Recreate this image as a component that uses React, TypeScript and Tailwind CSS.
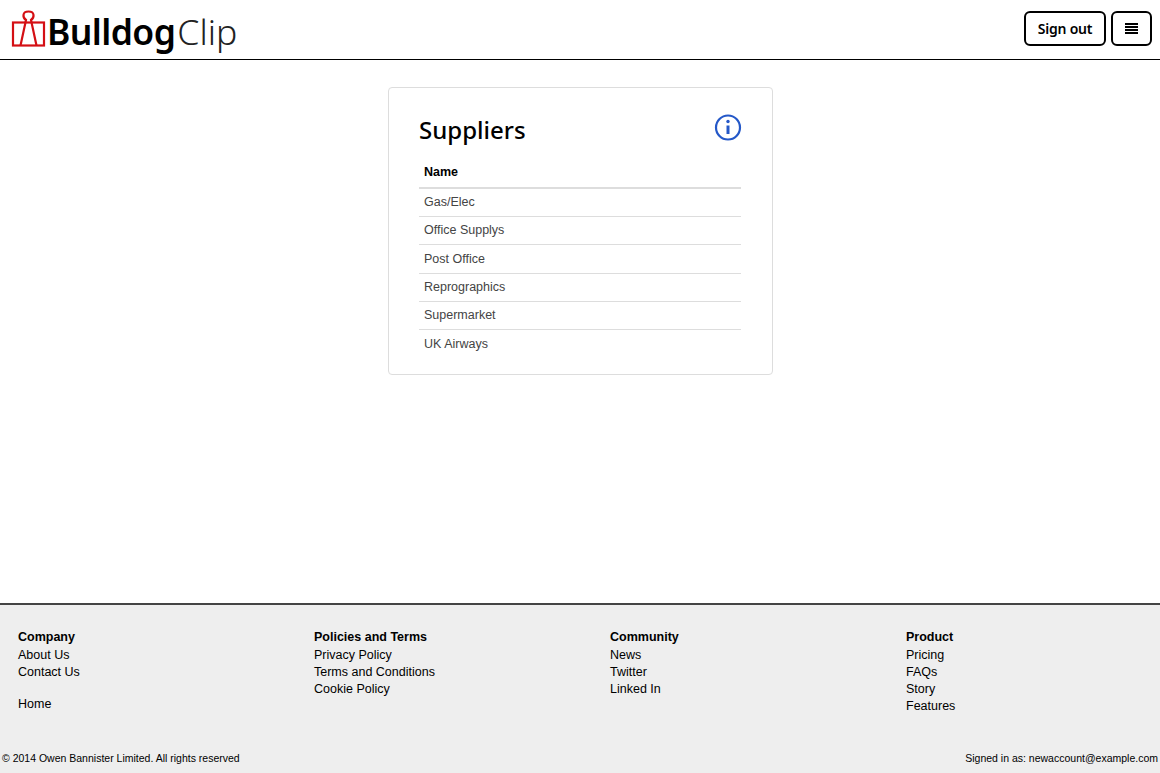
const suppliers = ["Gas/Elec", "Office Supplys", "Post Office", "Reprographics", "Supermarket", "UK Airways"];

const footerCols = [
  { title: "Company", links: ["About Us", "Contact Us"], extra: "Home" },
  { title: "Policies and Terms", links: ["Privacy Policy", "Terms and Conditions", "Cookie Policy"] },
  { title: "Community", links: ["News", "Twitter", "Linked In"] },
  { title: "Product", links: ["Pricing", "FAQs", "Story", "Features"] },
];

function ClipLogo() {
  return (
    <svg width="35" height="37" viewBox="0 0 35 37" fill="none" stroke="#d40f14" strokeWidth="2.2" className="mt-[-3px] block">
      <rect x="2" y="12.5" width="31" height="23" />
      <path d="M9.5 35.5 L15 10 C11.5 7.5 11 1.5 17.5 1.5 C24 1.5 23.5 7.5 20 10 L25.5 35.5" />
    </svg>
  );
}

export default function App() {
  return (
    <div className="flex h-[773px] flex-col bg-white font-['Liberation_Sans',sans-serif] text-black">
      <header className="flex h-[60px] shrink-0 items-center justify-between border-b border-black pl-[11px] pr-2">
        <div className="flex items-center">
          <ClipLogo />
          <div className="mt-[5px] ml-[1px] font-['Noto_Sans',sans-serif] text-[35.5px] leading-none tracking-[-0.6px]">
            <span className="font-semibold">Bulldog</span>
            <span className="ml-[2px] font-light tracking-[0px] text-[#222]">Clip</span>
          </div>
        </div>
        <div className="mt-[-3px] flex gap-[5px]">
          <button className="h-[35px] w-[82px] rounded-md border-2 border-black font-['Noto_Sans',sans-serif] text-[14px] font-semibold tracking-[-0.2px]">
            Sign out
          </button>
          <button className="flex h-[35px] w-[41px] flex-col items-center justify-center gap-[1px] rounded-md border-2 border-black">
            <span className="h-[2px] w-[13px] bg-black" />
            <span className="h-[2px] w-[13px] bg-black" />
            <span className="h-[2px] w-[13px] bg-black" />
            <span className="h-[2px] w-[13px] bg-black" />
          </button>
        </div>
      </header>

      <main className="flex flex-1 justify-center pt-[27px]">
        <section className="h-[288px] w-[385px] rounded border border-[#ddd] pl-[30.5px] pr-[30.5px] pt-[26px]">
          <div className="flex items-start justify-between">
            <h1 className="font-['Noto_Sans',sans-serif] text-[24px] font-medium leading-[32px]">Suppliers</h1>
            <svg width="28" height="28" viewBox="0 0 28 28" fill="none" stroke="#2458c8" className="mr-[-1px]">
              <circle cx="14" cy="13.5" r="12" strokeWidth="2.2" />
              <path d="M14 11.5 V20" strokeWidth="3" />
              <circle cx="14" cy="7.5" r="1.7" fill="#2458c8" stroke="none" />
            </svg>
          </div>
          <table className="mt-[13px] w-full text-[12.5px]">
            <thead>
              <tr className="border-b-2 border-[#ddd]">
                <th className="h-[29px] px-[5px] pb-[1px] text-left font-bold">Name</th>
              </tr>
            </thead>
            <tbody>
              {suppliers.map((name, i) => (
                <tr key={name} className={i > 0 ? "border-t border-[#ddd]" : ""}>
                  <td className="h-[28.4px] px-[5px] text-[#444]">{name}</td>
                </tr>
              ))}
            </tbody>
          </table>
        </section>
      </main>

      <footer className="h-[170px] shrink-0 border-t-2 border-[#444] bg-[#eee] text-[12.5px] leading-[17px]">
        <div className="grid h-[145px] grid-cols-[repeat(4,296px)] pl-[18px] pt-[24px]">
          {footerCols.map((col) => (
            <div key={col.title}>
              <div className="mb-[1px] font-bold">{col.title}</div>
              {col.links.map((link) => (
                <div key={link}>{link}</div>
              ))}
              {col.extra && <div className="mt-[15px]">{col.extra}</div>}
            </div>
          ))}
        </div>
        <div className="flex justify-between px-[2px] text-[10.5px]">
          <span>© 2014 Owen Bannister Limited. All rights reserved</span>
          <span>Signed in as: newaccount@example.com</span>
        </div>
      </footer>
    </div>
  );
}
